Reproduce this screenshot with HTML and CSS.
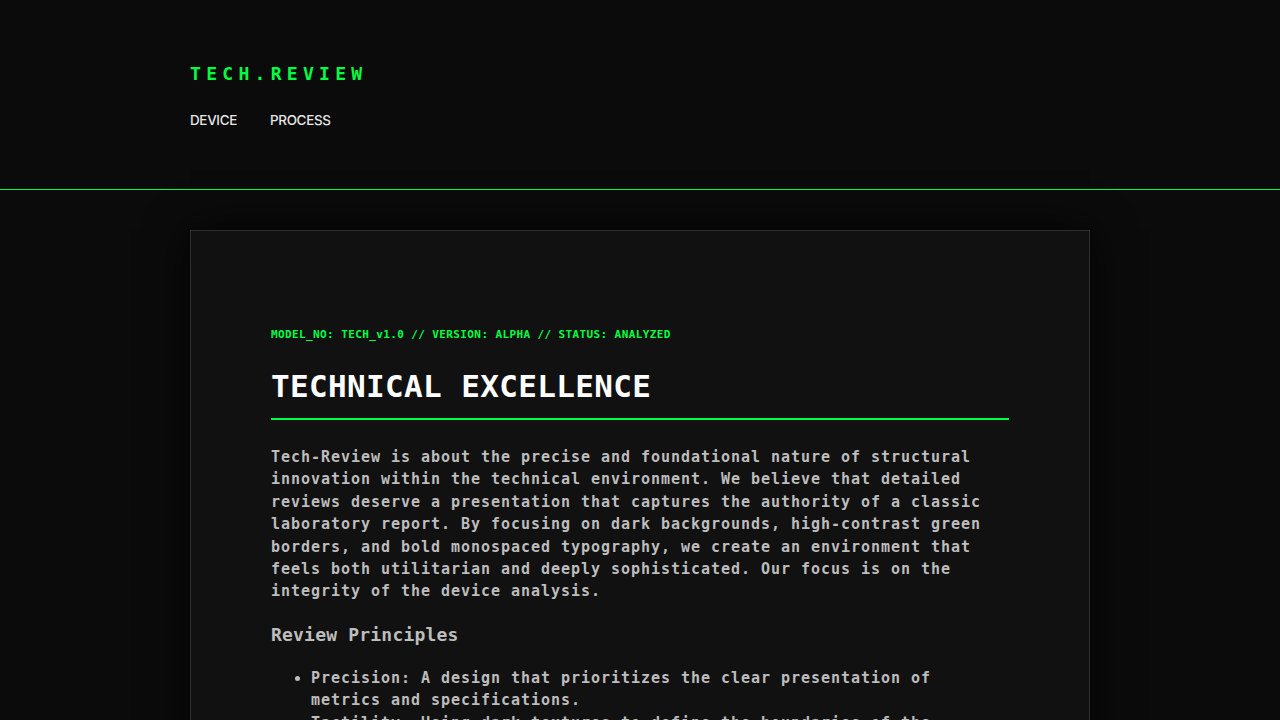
FILE: index.html
```html
<!DOCTYPE html>
<html lang="en">
<head>
<meta charset="utf-8">
<title>Tech Review</title>
<link rel="stylesheet" href="styles.css">
</head>
<body>
<header class="site-header">
  <div class="container">
    <div class="logo">TECH.REVIEW</div>
    <nav class="nav">
      <a href="#">DEVICE</a>
      <a href="#">PROCESS</a>
    </nav>
  </div>
</header>
<main class="container main">
  <article class="card">
    <div class="meta">MODEL_NO: TECH_v1.0 // VERSION: ALPHA // STATUS: ANALYZED</div>
    <h1 class="title">TECHNICAL EXCELLENCE</h1>
    <p class="lead">Tech-Review is about the precise and foundational nature of structural innovation within the technical environment. We believe that detailed reviews deserve a presentation that captures the authority of a classic laboratory report. By focusing on dark backgrounds, high-contrast green borders, and bold monospaced typography, we create an environment that feels both utilitarian and deeply sophisticated. Our focus is on the integrity of the device analysis.</p>
    <h2 class="subtitle">Review Principles</h2>
    <ul class="list">
      <li>Precision: A design that prioritizes the clear presentation of metrics and specifications.</li>
      <li>Tactility: Using dark textures to define the boundaries of the analysis and its sections.</li>
    </ul>
  </article>
</main>
</body>
</html>
```

FILE: styles.css
```css
* { box-sizing: border-box; }
html, body { margin: 0; padding: 0; }
body {
  background: #0b0b0b;
  color: #bdbdbd;
  font-family: "DejaVu Sans Mono", "Liberation Mono", monospace;
}
.container {
  width: 900px;
  margin: 0 auto;
}
.site-header {
  border-bottom: 1px solid #00ff41;
  padding: 64px 0 60px;
}
.logo {
  font-family: "DejaVu Sans Mono", monospace;
  font-weight: bold;
  font-size: 18px;
  letter-spacing: 5.3px;
  color: #00ff41;
  line-height: 20px;
}
.nav {
  display: flex;
  gap: 33px;
  margin-top: 27px;
  height: 18px;
}
.nav a {
  font-family: Inter, "Noto Sans", sans-serif;
  font-size: 13.4px;
  font-weight: 500;
  color: #e6e6e6;
  text-decoration: none;
  line-height: 18px;
  letter-spacing: -0.3px;
}
.main {
  padding-top: 40px;
}
.card {
  background: #111111;
  border: 1px solid #2e2e2e;
  padding: 97px 80px 80px;
  box-shadow: 0 0 40px rgba(0,0,0,0.8);
}
.meta {
  font-size: 11px;
  font-weight: bold;
  letter-spacing: 0.39px;
  color: #00ff41;
  line-height: 14px;
}
.title {
  margin: 24px 0 0;
  font-size: 31px;
  font-weight: bold;
  color: #ffffff;
  line-height: 40px;
  padding-bottom: 12px;
  border-bottom: 2px solid #00ff41;
  letter-spacing: 0.35px;
}
.lead {
  margin: 26px 0 0;
  font-size: 15px;
  font-weight: bold;
  letter-spacing: 0.97px;
  line-height: 22.4px;
  color: #bdbdbd;
}
.subtitle {
  margin: 19px 0 0;
  font-size: 18px;
  font-weight: bold;
  letter-spacing: 0.2px;
  line-height: 26px;
  color: #bdbdbd;
}
.list {
  margin: 19px 0 0;
  padding-left: 40px;
}
.list li {
  font-size: 15px;
  font-weight: bold;
  letter-spacing: 0.97px;
  line-height: 22.4px;
}
```
